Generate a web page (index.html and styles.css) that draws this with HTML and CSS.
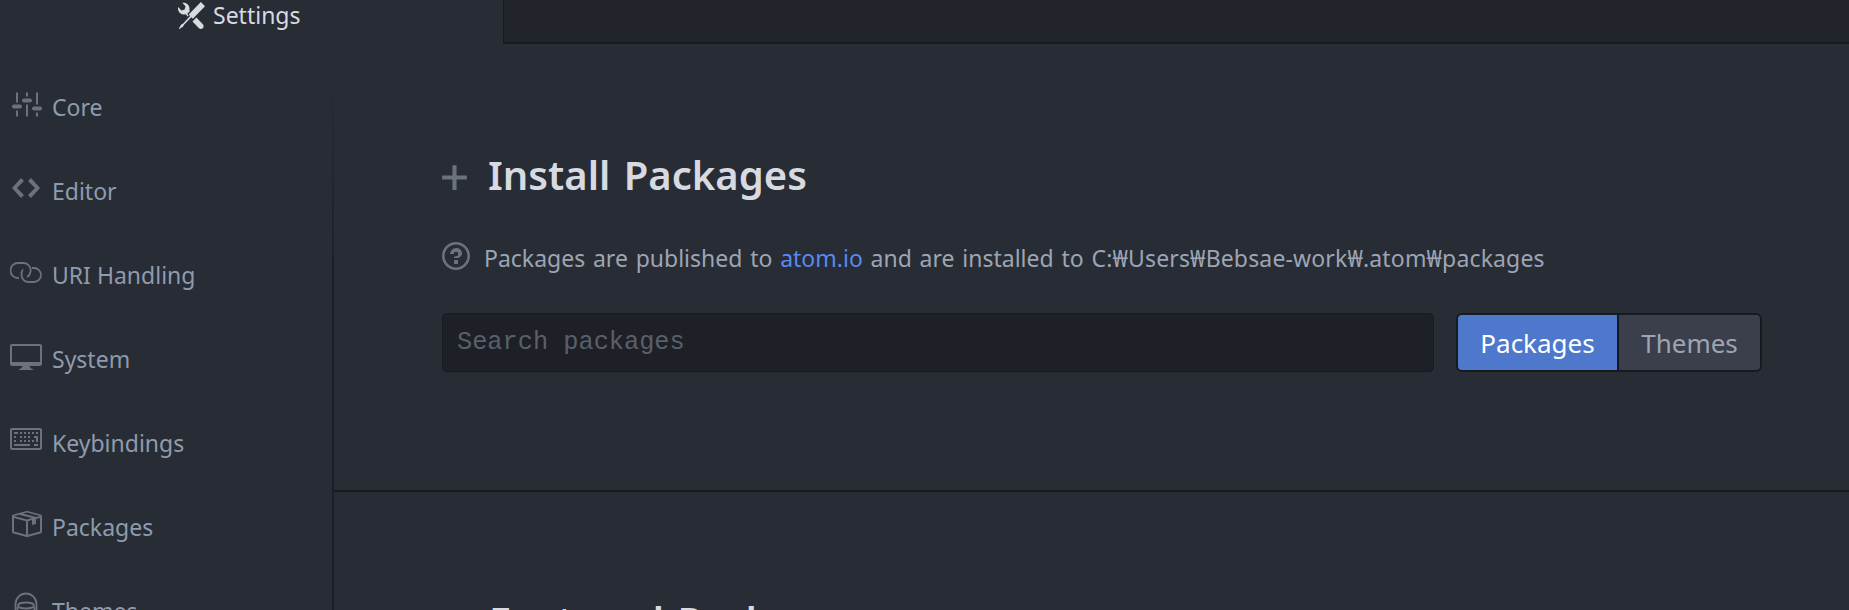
FILE: index.html
```html
<!DOCTYPE html>
<html lang="en">
<head>
<meta charset="utf-8">
<title>Settings</title>
<link rel="stylesheet" href="styles.css">
</head>
<body>
<div class="app">
  <header class="tabbar">
    <div class="tab">
      <svg class="tab-icon" viewBox="0 0 16 16"><path d="M4.48 7.27c.26.26 1.28 1.33 1.28 1.33l.56-.58-.88-.91 1.69-1.8s-.76-.74-.43-.45c.32-1.19.03-2.51-.87-3.44C4.93.5 3.66.2 2.52.51l1.93 2-.51 1.96-1.89.52-1.93-2C-.19 4.17.1 5.48 1 6.4c.94.98 2.29 1.26 3.48.87zm6.44 1.94l-2.33 2.3 3.84 3.98c.31.33.73.49 1.14.49.41 0 .82-.16 1.14-.49.63-.65.63-1.7 0-2.35l-3.79-3.93zM16 2.53L13.55 0 6.33 7.46l.88.91-4.31 4.46-.99.53-1.39 2.27.35.37 2.2-1.44.51-1.02L7.9 9.08l.88.91L16 2.53z"/></svg>
      <span>Settings</span>
    </div>
    <div class="tab-rest"></div>
  </header>
  <div class="main">
    <nav class="sidebar">
      <a class="nav-item"><span class="nav-icon"><svg viewBox="0 0 16 16" width="33" height="33"><path d="M4 7H3V2h1v5zm-1 7h1v-3H3v3zm5 0h1V8H8v6zm5 0h1v-2h-1v2zm1-12h-1v6h1V2zM9 2H8v2h1V2zM5 8H2c-.55 0-1 .45-1 1s.45 1 1 1h3c.55 0 1-.45 1-1s-.45-1-1-1zm5-3H7c-.55 0-1 .45-1 1s.45 1 1 1h3c.55 0 1-.45 1-1s-.45-1-1-1zm5 4h-3c-.55 0-1 .45-1 1s.45 1 1 1h3c.55 0 1-.45 1-1s-.45-1-1-1z"/></svg></span><span>Core</span></a>
      <a class="nav-item"><span class="nav-icon"><svg viewBox="0 0 14 16" width="28" height="32"><path d="M9.5 3L8 4.5 11.5 8 8 11.5 9.5 13 14 8 9.5 3zm-5 0L0 8l4.5 5L6 11.5 2.5 8 6 4.5 4.5 3z"/></svg></span><span>Editor</span></a>
      <a class="nav-item"><span class="nav-icon"><svg class="stroke-icon" viewBox="0 0 32 22" width="32" height="22"><path d="M9 17H8A7.500 7.500 0 0 1 8 2h6a7.500 7.500 0 0 1 6.500 9A7 7 0 0 1 17 16"/><path d="M13 8.500A7 7 0 0 0 11.500 14 7 7 0 0 0 18 21h6a7 7 0 0 0 0-14h-2"/></svg></span><span>URI Handling</span></a>
      <a class="nav-item"><span class="nav-icon"><svg viewBox="0 0 16 16" width="32" height="32"><path d="M15 2H1c-.55 0-1 .45-1 1v9c0 .55.45 1 1 1h5.340c-.25.61-.86 1.390-2.340 2h8c-1.480-.61-2.090-1.390-2.340-2H15c.55 0 1-.45 1-1V3c0-.55-.45-1-1-1zm0 9H1V3h14v8z"/></svg></span><span>System</span></a>
      <a class="nav-item"><span class="nav-icon"><svg viewBox="0 0 16 16" width="32" height="32"><path d="M10 5H9V4h1v1zM3 8H2v1h1V8zm5-2H7v1h1V6zM4 4H2v1h2V4zm8 7h2v-1h-2v1zM8 4H7v1h1V4zM2 11h8v-1H2v1zm3-2h1V8H5v1zm0-2h1V6H5v1zm4 2h1V8H9v1zM7 9h1V8H7v1zm-2-4h1V4H5v1zm-3 2h1V6H2v1zm9 2h1V8h-1v1zM9 7h1V6H9v1zm3-3h-1v1h1V4zm0 3h1V6h-1v1zm2-3h-1v1h1V4zm0 2h-1v3h1V6zM16 3v9c0 .55-.45 1-1 1H1c-.55 0-1-.45-1-1V3c0-.55.45-1 1-1h14c.55 0 1 .45 1 1zm-1 0H1v9h14V3z"/></svg></span><span>Keybindings</span></a>
      <a class="nav-item"><span class="nav-icon"><svg viewBox="0 0 16 16" width="32" height="32"><path d="M1 4.270v7.470c0 .45.3.84.75.97l6.500 1.730c.16.05.34.05.5 0l6.500-1.730c.45-.13.75-.52.75-.97V4.270c0-.45-.3-.84-.75-.97l-6.500-1.740a1.400 1.400 0 0 0-.5 0L1.750 3.300c-.45.13-.75.52-.75.97zm7 9.090l-6-1.590V5l6 1.610v6.750zM2 4l2.500-.67L11 5.060l-2.500.67L2 4zm13 7.770l-6 1.590V6.610l2-.55V8.500l2-.53V5.530L15 5v6.770zm-2-7.240L6.500 2.800l2-.53L15 4l-2 .53z"/></svg></span><span>Packages</span></a>
      <a class="nav-item"><span class="nav-icon"><svg class="stroke-icon" viewBox="0 0 24 32" width="24" height="32"><path d="M1.500 18V12a10.500 10.500 0 0 1 21 0v6"/><ellipse cx="12" cy="13.500" rx="8" ry="3"/><path d="M3.500 15v15M20.500 15v15"/></svg></span><span>Themes</span></a>
    </nav>
    <div class="sidebar-rule"></div>
    <main class="content">
      <section class="install">
        <h1 class="section-title">
          <svg class="plus" viewBox="0 0 12 16" width="25" height="33"><path d="M12 9H7v5H5V9H0V7h5V2h2v5h5v2z"/></svg>
          <span>Install Packages</span>
        </h1>
        <p class="hint">
          <svg class="hint-icon" viewBox="0 0 14 16" width="28" height="32"><path d="M6 10h2v2H6v-2zm4-3.500C10 8.640 8 9 8 9H6c0-.55.45-1 1-1h.5c.28 0 .5-.22.5-.5v-1c0-.28-.22-.5-.5-.5h-1c-.28 0-.5.22-.5.5V7H4c0-1.500 1.500-3 3-3s3 1 3 2.500zM7 2.300c3.140 0 5.700 2.560 5.700 5.700s-2.560 5.700-5.700 5.700A5.710 5.710 0 0 1 1.300 8c0-3.140 2.560-5.700 5.700-5.700zM7 1C3.140 1 0 4.140 0 8s3.140 7 7 7 7-3.140 7-7-3.140-7-7-7z"/></svg>
          <span>Packages are published to <a class="link">atom.io</a> and are installed to <span class="path">C:₩Users₩Bebsae-work₩.atom₩packages</span></span>
        </p>
        <div class="search-row">
          <input class="search" type="text" placeholder="Search packages">
          <div class="btn-group">
            <button class="btn btn-selected">Packages</button>
            <button class="btn">Themes</button>
          </div>
        </div>
      </section>
      <section class="featured">
        <h1 class="section-title featured-title"><span>Featured Packages</span></h1>
      </section>
    </main>
  </div>
</div>
</body>
</html>
```

FILE: styles.css
```css
* { box-sizing: border-box; }
html, body { margin: 0; height: 100%; overflow: hidden; }
body { background: #282c34; font-family: "Noto Sans", "Open Sans", sans-serif; color: #9da5b4; }
.app { height: 610px; display: flex; flex-direction: column; overflow: hidden; }

.tabbar { display: flex; height: 44px; flex: none; }
.tab { width: 503px; flex: none; display: flex; align-items: flex-start; gap: 8px; padding-left: 178px; padding-top: 2px; color: #d7dae0; font-size: 23px; line-height: 27px; }
.tab-icon { width: 27px; height: 27px; fill: #d7dae0; flex: none; }
.tab-rest { flex: 1; background: #21252b; border-left: 1px solid #181a1f; border-bottom: 2px solid #181a1f; }

.main { flex: 1; display: flex; min-height: 0; }
.sidebar { width: 332px; flex: none; padding: 21px 0 0 10px; display: flex; flex-direction: column; }
.nav-item { height: 84px; flex: none; display: flex; align-items: center; font-size: 23px; color: #8f9bad; }
.nav-icon { width: 42px; flex: none; display: flex; justify-content: center; padding-right: 10px; padding-bottom: 6px; }
.nav-icon svg { fill: #6b717d; }
.nav-icon .stroke-icon { fill: none; stroke: #6b717d; stroke-width: 1.800; }

.sidebar-rule { width: 2px; flex: none; background: linear-gradient(to bottom, transparent 30px, #1c1f25 240px); }

.content { flex: 1; min-width: 0; }
.install { height: 448px; padding: 106px 87px 0 108px; border-bottom: 2px solid #181a1f; }
.section-title { margin: 0; display: flex; align-items: center; gap: 21px; font-size: 40px; line-height: 50px; font-weight: 600; color: #d7dae0; word-spacing: 3px; }
.plus { fill: #6b717d; flex: none; margin-top: 4px; }
.hint { margin: 40px 0 0; display: flex; align-items: center; gap: 14px; font-size: 23px; line-height: 32px; word-spacing: 1.800px; color: #9da5b4; }
.hint-icon { fill: #6b717d; flex: none; margin-bottom: 4px; }
.path { letter-spacing: .15px; }
.link { color: #568af2; }
.search-row { margin-top: 37px; display: flex; gap: 22px; }
.search { flex: 1; min-width: 0; height: 59px; padding: 0 14px; border: 1px solid #181a1f; border-radius: 5px; background: #1e2027; font-family: "Liberation Mono", monospace; font-size: 25.300px; color: #d7dae0; outline: none; }
.search::placeholder { color: #5a5f6a; opacity: 1; }
.btn-group { width: 306px; flex: none; display: flex; border: 2px solid #181a1f; border-radius: 6px; overflow: hidden; background: #181a1f; }
.btn { height: 55px; border: 0; padding: 0; font-family: inherit; font-size: 26px; background: #3a3f4b; color: #9da5b4; flex: 1; }
.btn-selected { width: 159px; flex: none; margin-right: 2px; background: #4d78cc; color: #fff; }

.featured { padding: 104px 0 0 155px; }
.featured-title { display: block; }
```
